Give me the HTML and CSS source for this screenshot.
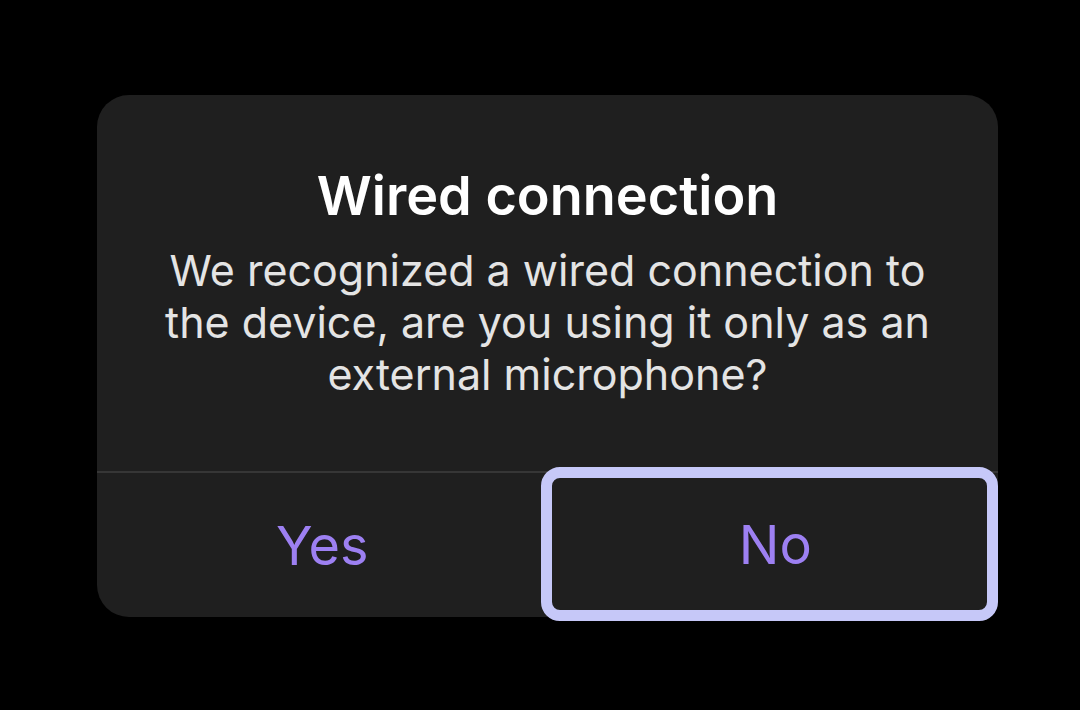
FILE: index.html
```html
<!DOCTYPE html>
<html lang="en">

<head>
    <meta charset="UTF-8">
    <meta name="viewport" content="width=device-width, initial-scale=1.0">
    <title>Wired connection</title>
    <link rel="stylesheet" href="styles.css">
</head>

<body>
    <div class="dialog" role="alertdialog" aria-labelledby="dialogTitle">
        <div class="dialog-content">
            <h1 id="dialogTitle">Wired connection</h1>
            <p class="message">We recognized a wired connection to<br>the device, are you using it only as an<br>external microphone?</p>
        </div>

        <!-- Answer buttons -->
        <div class="dialog-actions">
            <button class="action">Yes</button>
            <button class="action focused">No</button>
        </div>
    </div>
</body>

</html>
```

FILE: styles.css
```css
body {
    font-family: Inter, "Noto Sans", sans-serif;
    margin: 0;
    padding: 95px 0 93px 97px;
    background-color: #000000;
}

.dialog {
    width: 901px;
    height: 522px;
    background-color: #1f1f1f;
    border-radius: 32px;
    display: flex;
    flex-direction: column;
}

.dialog-content {
    flex: 1;
    padding-top: 69px;
    text-align: center;
    border-bottom: 2px solid #363636;
}

h1 {
    color: #ffffff;
    font-size: 54px;
    font-weight: 600;
    line-height: 64px;
    margin: 0;
}

.message {
    color: #e4e4e4;
    font-size: 43px;
    line-height: 52px;
    margin: 16px 0 0;
}

.dialog-actions {
    display: grid;
    grid-template-columns: 1fr 1fr;
    height: 144px;
}

.action {
    background: none;
    border: none;
    padding: 0;
    color: #9d80f2;
    font-family: inherit;
    font-size: 54px;
    cursor: pointer;
}

/* keyboard focus ring */
.action.focused {
    margin: 5px 11px 7px 4px;
    padding-left: 12px;
    border-radius: 8px;
    outline: 11px solid #c6c8f8;
}
```
